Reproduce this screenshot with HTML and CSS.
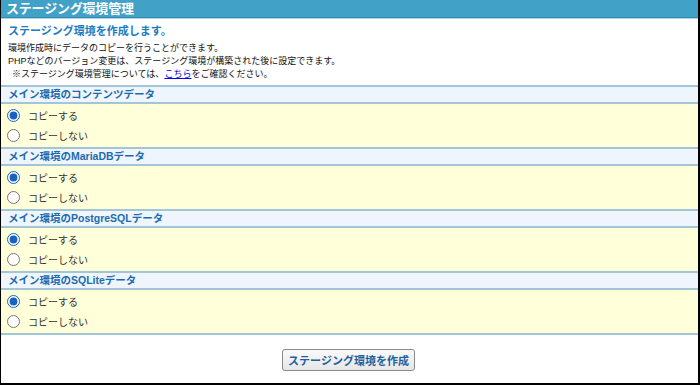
FILE: index.html
```html
<!DOCTYPE html>
<html lang="ja">
<head>
  <meta charset="UTF-8" />
  <title>ステージング環境管理</title>
  <link rel="stylesheet" href="styles.css">
</head>
<body>
  <div class="panel">
    <h1 class="panel-title">ステージング環境管理</h1>

    <div class="intro">
      <h2>ステージング環境を作成します。</h2>
      <p>環境作成時にデータのコピーを行うことができます。<br>
        PHPなどのバージョン変更は、ステージング環境が構築された後に設定できます。<br>
        <span class="note">※ステージング環境管理については、<a href="#">こちら</a>をご確認ください。</span></p>
    </div>

    <form>
      <div class="section">
        <h3>メイン環境のコンテンツデータ</h3>
        <div class="options">
          <label><input type="radio" name="contents" checked> コピーする</label>
          <label><input type="radio" name="contents"> コピーしない</label>
        </div>
      </div>
      <div class="section">
        <h3>メイン環境のMariaDBデータ</h3>
        <div class="options">
          <label><input type="radio" name="mariadb" checked> コピーする</label>
          <label><input type="radio" name="mariadb"> コピーしない</label>
        </div>
      </div>
      <div class="section">
        <h3>メイン環境のPostgreSQLデータ</h3>
        <div class="options">
          <label><input type="radio" name="postgres" checked> コピーする</label>
          <label><input type="radio" name="postgres"> コピーしない</label>
        </div>
      </div>
      <div class="section last">
        <h3>メイン環境のSQLiteデータ</h3>
        <div class="options">
          <label><input type="radio" name="sqlite" checked> コピーする</label>
          <label><input type="radio" name="sqlite"> コピーしない</label>
        </div>
      </div>

      <div class="actions">
        <button type="button" class="btn-create">ステージング環境を作成</button>
      </div>
    </form>
  </div>
</body>
</html>
```

FILE: styles.css
```css
body {
  margin: 0;
  font-family: "Liberation Sans", "Noto Sans CJK JP", sans-serif;
  background-color: #fff;
}

.panel {
  width: 697px;
  height: 383px;
  border-left: 1px solid #000;
  border-right: 2px solid #000;
  border-bottom: 2px solid #000;
  overflow: hidden;
}

.panel-title {
  margin: 0;
  height: 17px;
  padding-left: 5px;
  background-color: #41a1c7;
  border-bottom: 1px solid #2f8bb2;
  box-shadow: 0 1px 0 #b4d3e4;
  color: #fff;
  font-size: 13px;
  line-height: 17px;
  font-weight: bold;
  letter-spacing: -0.2px;
}

.intro {
  padding: 5px 7px 4px;
}

.intro h2 {
  margin: 0;
  color: #1b7dc1;
  font-size: 11px;
  line-height: 16px;
  font-weight: bold;
}

.intro p {
  margin: 3px 0 0;
  font-size: 9px;
  line-height: 13px;
  color: #111;
}

.intro .note {
  margin-left: 4px;
}

.intro a {
  color: #0000ee;
}

.section {
  border-top: 2px solid #a2c5d7;
}

.section.last {
  border-bottom: 2px solid #a2c5d7;
}

.section h3 {
  margin: 0;
  height: 15px;
  padding-left: 7px;
  background-color: #eef5fd;
  border-bottom: 2px solid #a2c5d7;
  color: #1d6bae;
  font-size: 10.5px;
  line-height: 15px;
  font-weight: bold;
}

.options {
  height: 40px;
  padding: 1px 0 2px;
  background-color: #ffffd9;
}

.options label {
  display: flex;
  align-items: center;
  height: 20px;
  padding-left: 5px;
  font-size: 10px;
  color: #333;
}

.options input {
  margin: 0 8px 0 1px;
  width: 13px;
  height: 13px;
  accent-color: #1a62c0;
}

.actions {
  display: flex;
  justify-content: center;
  padding-top: 14px;
  padding-right: 2px;
}

.btn-create {
  height: 22px;
  padding: 0 5px;
  border: 1px solid #8a8a8a;
  border-radius: 3px;
  background: linear-gradient(#fafafa, #e6e6e6);
  color: #1f5f9e;
  font-family: "Liberation Sans", "Noto Sans CJK JP", sans-serif;
  font-size: 11px;
  font-weight: bold;
  cursor: pointer;
}
```
